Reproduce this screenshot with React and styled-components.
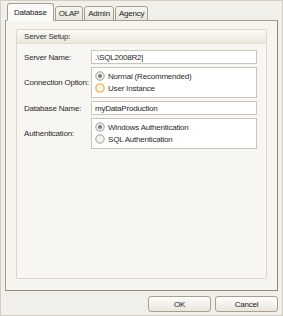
import React from 'react';
import styled, { createGlobalStyle } from 'styled-components';

const GlobalStyle = createGlobalStyle`
  html, body {
    margin: 0;
    padding: 0;
    background: #f0eee7;
  }
  body {
    font-family: "Liberation Sans", Arial, sans-serif;
    font-size: 8px;
    letter-spacing: -0.2px;
    color: #2b2b2b;
  }
`;

const Window = styled.div`
  width: 283px;
  height: 316px;
  box-sizing: border-box;
  border: 1px solid #d2cec4;
  background: #f1efe9;
  padding: 3px 4px 3px 4px;
  display: flex;
  flex-direction: column;
`;

const TabRow = styled.div`
  display: flex;
  align-items: flex-end;
  height: 17px;
  padding-left: 2px;
  margin-bottom: -1px;
  position: relative;
  z-index: 1;
`;

const Tab = styled.div`
  box-sizing: border-box;
  height: ${p => (p.$active ? '18px' : '15px')};
  padding: 0 ${p => (p.$active ? '6px' : '3px')};
  margin-right: 1px;
  display: flex;
  align-items: center;
  border: 1px solid #a59f91;
  border-bottom: ${p => (p.$active ? '1px solid #fbfbf9' : '1px solid #a59f91')};
  border-radius: 3px 3px 0 0;
  background: ${p =>
    p.$active ? '#fbfbf9' : 'linear-gradient(#f7f6f2, #e8e5dc)'};
  color: #222;
`;

const Panel = styled.div`
  flex: 1;
  box-sizing: border-box;
  border: 1px solid #a59f91;
  border-right-color: #8f887b;
  border-bottom-color: #8f887b;
  background: #f5f4ef;
  padding: 8px 10px 11px 10px;
  display: flex;
`;

const GroupBox = styled.div`
  flex: 1;
  border: 1px solid #dcd7c6;
  border-radius: 2px;
  background: #f7f6f2;
  display: flex;
  flex-direction: column;
`;

const GroupHeader = styled.div`
  height: 13px;
  display: flex;
  align-items: center;
  padding-left: 7px;
  background: linear-gradient(#fbfaf6, #ebe7dc);
  border-bottom: 1px solid #e3ded0;
  color: #333;
`;

const FormGrid = styled.div`
  display: grid;
  grid-template-columns: 67px 166px;
  row-gap: 3px;
  padding: 6px 8px 0 7px;
  align-items: center;
`;

const Label = styled.div`
  white-space: nowrap;
  color: #2b2b2b;
`;

const TextBox = styled.div`
  box-sizing: border-box;
  height: 14px;
  border: 1px solid #c9c5b9;
  background: #fff;
  padding-left: 3px;
  display: flex;
  align-items: center;
  color: #1e1e1e;
`;

const RadioBox = styled.div`
  box-sizing: border-box;
  border: 1px solid #c9c5b9;
  background: #fff;
  padding: 2px 3px 3px;
  display: flex;
  flex-direction: column;
`;

const RadioRow = styled.div`
  display: flex;
  align-items: center;
  gap: 3px;
  height: 12px;
  white-space: pre;
`;

const Radio = ({ checked, hover }) => (
  <svg width="10" height="10" viewBox="0 0 10 10">
    <circle
      cx="5"
      cy="5"
      r="4.2"
      fill="#f3f2ee"
      stroke={hover ? '#f2b84a' : '#8f8f8f'}
      strokeWidth={hover ? 1.3 : 0.9}
    />
    {checked && <circle cx="5" cy="5" r="2.1" fill="#7d7d7d" />}
  </svg>
);

const ButtonRow = styled.div`
  display: flex;
  justify-content: flex-end;
  gap: 4px;
  padding-top: 5px;
`;

const Button = styled.div`
  box-sizing: border-box;
  width: 63px;
  height: 16px;
  border: 1px solid #a89f8e;
  border-radius: 3px;
  background: linear-gradient(#fdfdfb, #e9e6dd);
  display: flex;
  align-items: center;
  justify-content: center;
  color: #222;
`;

const tabs = ['Database', 'OLAP', 'Admin', 'Agency'];

export default function App() {
  return (
    <>
      <GlobalStyle />
      <Window>
        <TabRow>
          {tabs.map((t, i) => (
            <Tab key={t} $active={i === 0}>{t}</Tab>
          ))}
        </TabRow>
        <Panel>
          <GroupBox>
            <GroupHeader>Server Setup:</GroupHeader>
            <FormGrid>
              <Label>Server Name:</Label>
              <TextBox>.\SQL2008R2|</TextBox>

              <Label>Connection Option:</Label>
              <RadioBox>
                <RadioRow><Radio checked />Normal (Recommended)</RadioRow>
                <RadioRow><Radio hover />User Instance</RadioRow>
              </RadioBox>

              <Label>Database Name:</Label>
              <TextBox>myDataProduction</TextBox>

              <Label>Authentication:</Label>
              <RadioBox>
                <RadioRow><Radio checked />Windows Authentication</RadioRow>
                <RadioRow><Radio />SQL Authentication</RadioRow>
              </RadioBox>
            </FormGrid>
          </GroupBox>
        </Panel>
        <ButtonRow>
          <Button>OK</Button>
          <Button>Cancel</Button>
        </ButtonRow>
      </Window>
    </>
  );
}
